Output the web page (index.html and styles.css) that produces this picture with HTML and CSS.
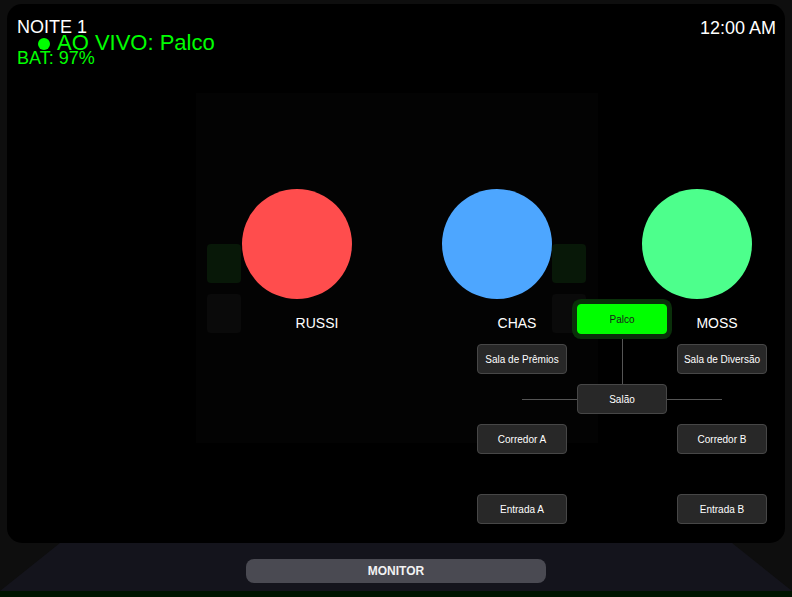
FILE: index.html
```html
<!DOCTYPE html>
<html>
<head>
    <title>Monitor - Noite 1</title>
    <link rel="stylesheet" href="styles.css">
</head>
<body>
<div class="screen">
    <div class="hud-night">NOITE 1</div>
    <div class="hud-live"><span class="live-dot"></span>AO VIVO: Palco</div>
    <div class="hud-bat">BAT: 97%</div>
    <div class="hud-clock">12:00 AM</div>

    <div class="room-feed"></div>

    <div class="stage">
        <div class="doors doors-left">
            <div class="door door-on"></div>
            <div class="door"></div>
        </div>
        <div class="char">
            <div class="char-body russi"></div>
            <div class="char-name">RUSSI</div>
        </div>
        <div class="char char-mid">
            <div class="char-body chas"></div>
            <div class="char-name">CHAS</div>
        </div>
        <div class="doors">
            <div class="door door-on"></div>
            <div class="door"></div>
        </div>
        <div class="char char-last">
            <div class="char-body moss"></div>
            <div class="char-name">MOSS</div>
        </div>
    </div>

    <!-- mapa das salas -->
    <div class="map">
        <div class="map-line line-h"></div>
        <div class="map-line line-v"></div>
        <div class="cam cam-active" style="left:100px; top:5px;">Palco</div>
        <div class="cam" style="left:0; top:45px;">Sala de Prêmios</div>
        <div class="cam" style="left:200px; top:45px;">Sala de Diversão</div>
        <div class="cam" style="left:100px; top:85px;">Salão</div>
        <div class="cam" style="left:0; top:125px;">Corredor A</div>
        <div class="cam" style="left:200px; top:125px;">Corredor B</div>
        <div class="cam" style="left:0; top:195px;">Entrada A</div>
        <div class="cam" style="left:200px; top:195px;">Entrada B</div>
    </div>
</div>
<div class="desk">
    <div class="monitor-btn">MONITOR</div>
</div>
<div class="floor"></div>
</body>
</html>
```

FILE: styles.css
```css
body {
    margin: 0;
    background-color: #0e0e0e;
    font-family: "Liberation Sans", Arial, sans-serif;
    overflow: hidden;
}

.screen {
    margin: 4px 7px 0;
    height: 539px;
    background-color: #000;
    border-radius: 15px;
    position: relative;
    overflow: hidden;
}

/* HUD sobreposto */
.hud-night,
.hud-live,
.hud-bat,
.hud-clock {
    position: absolute;
    z-index: 5;
    white-space: nowrap;
}
.hud-night {
    left: 10px;
    top: 13px;
    font-size: 18px;
    color: #fff;
}
.hud-live {
    left: 31px;
    top: 26px;
    font-size: 22px;
    color: #00ff00;
    display: flex;
    align-items: center;
}
.live-dot {
    width: 12px;
    height: 12px;
    border-radius: 50%;
    background-color: #00ff00;
    margin-right: 7px;
    margin-top: 2px;
}
.hud-bat {
    left: 10px;
    top: 44px;
    font-size: 18px;
    color: #00ff00;
}
.hud-clock {
    right: 9px;
    top: 14px;
    font-size: 18px;
    color: #fff;
}

.room-feed {
    position: absolute;
    left: 189px;
    top: 89px;
    width: 402px;
    height: 350px;
    background-color: #030303;
    z-index: 0;
}

.stage {
    position: relative;
    z-index: 1;
    display: flex;
    align-items: flex-start;
    padding: 185px 0 0 200px;
}

.doors {
    display: flex;
    flex-direction: column;
    gap: 11px;
    margin-top: 55px;
}
.doors-left {
    margin-right: 1px;
}
.door {
    width: 34px;
    height: 39px;
    border-radius: 4px;
    background-color: #0a0a0a;
}
.door-on {
    background-color: #081808;
}

.char {
    width: 110px;
}
.char-mid {
    margin-left: 90px;
}
.char-last {
    margin-left: 56px;
}
.char-body {
    width: 110px;
    height: 110px;
    border-radius: 50%;
}
.russi { background-color: #ff4d4d; }
.chas { background-color: #4da6ff; }
.moss { background-color: #4dff8c; }

.char-name {
    margin: 16px 0 0 40px;
    text-align: center;
    color: #fff;
    font-size: 14px;
}

.map {
    position: absolute;
    z-index: 2;
    left: 470px;
    top: 295px;
    width: 290px;
    height: 225px;
}
.map-line {
    position: absolute;
    background-color: #555;
}
.line-h {
    left: 45px;
    top: 100px;
    width: 200px;
    height: 1px;
}
.line-v {
    left: 145px;
    top: 20px;
    width: 1px;
    height: 80px;
}
.cam {
    position: absolute;
    box-sizing: border-box;
    width: 90px;
    height: 30px;
    background-color: #282828;
    border: 1px solid #474747;
    border-radius: 4px;
    color: #fff;
    font-size: 10px;
    display: flex;
    align-items: center;
    justify-content: center;
    white-space: nowrap;
}
.cam-active {
    background-color: #00ff00;
    border-color: #00ff00;
    color: #1a1a1a;
    box-shadow: 0 0 0 5px #0a300a;
}

.desk {
    height: 48px;
    background-color: #14141c;
    clip-path: polygon(60px 0, 732px 0, 100% 100%, 0 100%);
    display: flex;
    justify-content: center;
    padding-top: 16px;
    box-sizing: border-box;
}
.monitor-btn {
    width: 300px;
    height: 24px;
    border-radius: 8px;
    background-color: #4a4a52;
    color: #f2f2f2;
    font-size: 12px;
    font-weight: bold;
    display: flex;
    align-items: center;
    justify-content: center;
}

.floor {
    height: 6px;
    background-color: #001400;
}
```
